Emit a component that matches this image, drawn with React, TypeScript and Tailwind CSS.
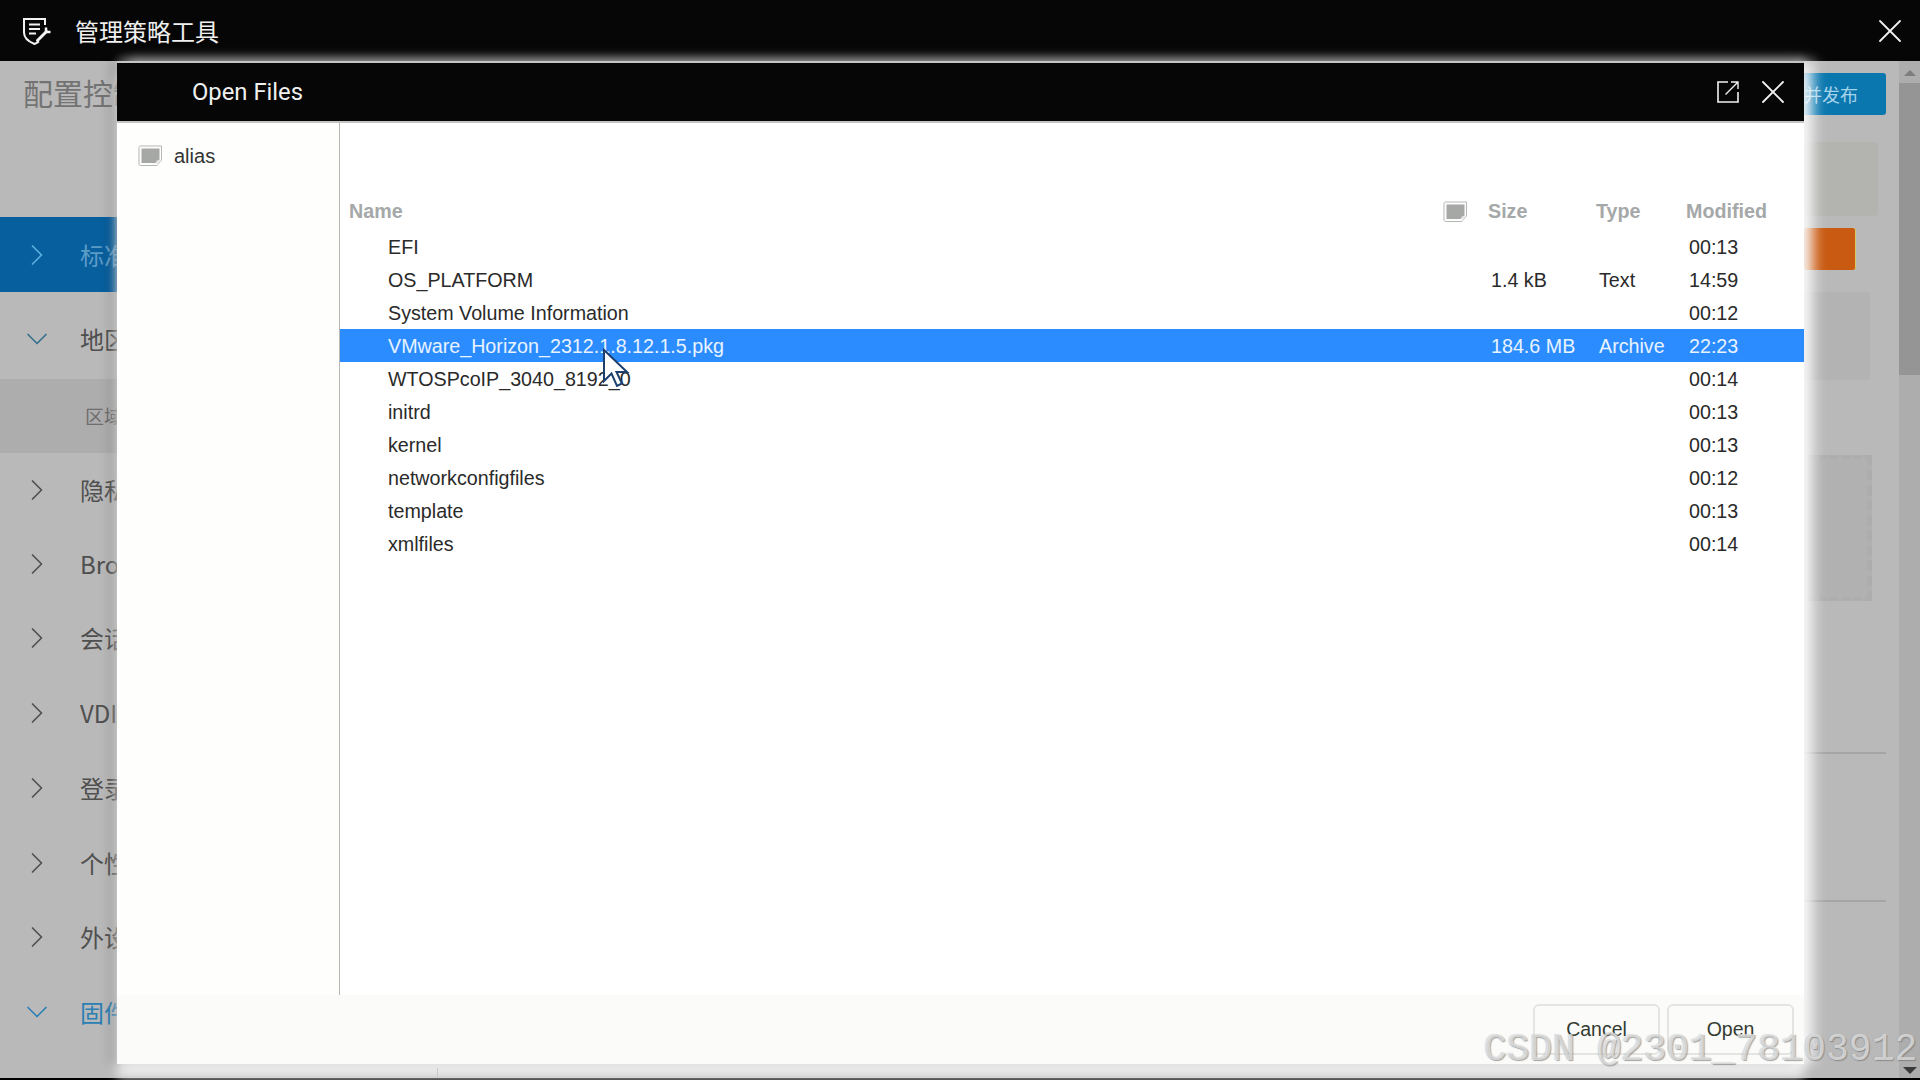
import { ChevronDown, ChevronRight, X } from "lucide-react"

const navItems = [
  { label: "标准配置", open: false, active: true, height: "h-[75px]" },
  { label: "地区", open: true, height: "h-[76px] mt-[9px]" },
  { label: "区域", sub: true, height: "h-[74px] mt-[2px]" },
  { label: "隐私", height: "h-[73px]" },
  { label: "Browser", height: "h-[75px]" },
  { label: "会话", height: "h-[74px]" },
  { label: "VDI", height: "h-[75px]" },
  { label: "登录", height: "h-[75px]" },
  { label: "个性化", height: "h-[75px]" },
  { label: "外设", height: "h-[74px]" },
  { label: "固件", open: true, blue: true, height: "h-[75px]" },
]

const files = [
  { name: "EFI", size: "", type: "", modified: "00:13" },
  { name: "OS_PLATFORM", size: "1.4 kB", type: "Text", modified: "14:59" },
  { name: "System Volume Information", size: "", type: "", modified: "00:12" },
  { name: "VMware_Horizon_2312.1.8.12.1.5.pkg", size: "184.6 MB", type: "Archive", modified: "22:23", selected: true },
  { name: "WTOSPcoIP_3040_8192_0", size: "", type: "", modified: "00:14" },
  { name: "initrd", size: "", type: "", modified: "00:13" },
  { name: "kernel", size: "", type: "", modified: "00:13" },
  { name: "networkconfigfiles", size: "", type: "", modified: "00:12" },
  { name: "template", size: "", type: "", modified: "00:13" },
  { name: "xmlfiles", size: "", type: "", modified: "00:14" },
]

const DriveIcon = () => (
  <svg width="25" height="22" viewBox="0 0 25 22" fill="none">
    <path d="M1 2.5C1 1.7 1.7 1 2.5 1H23.5V15L19 20.5H2.5C1.7 20.5 1 19.8 1 19Z" fill="#fdfdfd" stroke="#b5b7b5" />
    <path d="M3.5 3.5H21.5V14.5L17.5 18H3.5Z" fill="#a6a8a5" />
    <path d="M23.5 15L19 20.5L18.5 15.5Z" fill="#e8e8e8" />
  </svg>
)

const ShieldLogo = () => (
  <svg width="30" height="30" viewBox="0 0 30 30" fill="none" stroke="#f2f2f2" strokeWidth="2">
    <path d="M17 25.5C15.5 26.6 13.8 27.5 12.5 28C7.5 26 2 22.5 2 16.5V3H23V9" />
    <path d="M7 8.5H18M7 13H18M7 17.5H14" />
    <path d="M15.5 24.5L24.5 15.5" strokeWidth="3" strokeLinecap="round" />
    <path d="M24 11.5V16H28.5" strokeWidth="2.5" />
  </svg>
)

const PopOutIcon = () => (
  <svg width="22" height="22" viewBox="0 0 22 22" fill="none" stroke="#f2f2f2" strokeWidth="1.6">
    <path d="M11 1H1V21H21V11" />
    <path d="M8.5 13.5L21 1M14 1H21V8" strokeWidth="1.4" />
  </svg>
)

const Cursor = () => (
  <svg className="absolute left-[602px] top-[348px]" width="28" height="40" viewBox="0 0 28 40">
    <path d="M2 2V33L9.5 25.5L15 38L20 35.5L14.5 24H25Z" fill="#ffffff" stroke="#1c3f6e" strokeWidth="2" />
  </svg>
)

const App = () => {
  return (
    <div className="relative flex h-[1080px] w-[1920px] flex-col overflow-hidden bg-black font-['Liberation_Sans','Noto_Sans_CJK_SC',sans-serif]">
      <header className="flex h-[61px] shrink-0 items-center bg-[#060606] pl-[22px] pr-[10px] text-[#f0f0f0]">
        <ShieldLogo />
        <span className="ml-[23px] font-['Noto_Sans_CJK_SC',sans-serif] text-[24px]">管理策略工具</span>
        <X className="ml-auto" size={40} strokeWidth={1.1} />
      </header>

      <div className="flex flex-1 overflow-hidden bg-[#b9b9b9]">
        <aside className="w-[120px] shrink-0 overflow-hidden">
          <div className="flex h-[94px] items-start whitespace-nowrap pl-[23px] pt-[9px] font-['Noto_Sans_CJK_SC',sans-serif] text-[30px] text-[#737373]">
            配置控制台
          </div>
          <div className="h-[62px]" />
          {navItems.map((item) => (
            <div
              key={item.label}
              className={`flex items-center whitespace-nowrap font-['Noto_Sans_CJK_SC',sans-serif] ${item.height} ${
                item.active ? "bg-[#085f9e] text-[#5b9cc6]" : item.blue ? "text-[#2a7fb4]" : "text-[#4f4f4f]"
              } ${item.sub ? "bg-[#adadad] pl-[85px] text-[19px] text-[#6e6e6e]" : "pl-[19px] text-[24px]"}`}
            >
              {!item.sub &&
                (item.open ? (
                  <ChevronDown className={`mr-[25px] shrink-0 ${item.blue ? "text-[#2a7fb4]" : "text-[#37708f]"}`} size={36} strokeWidth={1.1} />
                ) : (
                  <ChevronRight className={`mr-[25px] shrink-0 ${item.active ? "text-[#5db0e0]" : "text-[#4f4f4f]"}`} size={36} strokeWidth={1.1} />
                ))}
              {item.label}
            </div>
          ))}
        </aside>

        <main className="flex-1" />

        <section className="flex w-[95px] shrink-0 flex-col items-end pr-[13px]">
          <div className="mt-[12px] flex h-[42px] w-[84px] items-center justify-end whitespace-nowrap rounded-[3px] bg-[#0a77ae] pr-[28px] font-['Noto_Sans_CJK_SC',sans-serif] text-[18px] text-[#a5d3ea]">
            并发布
          </div>
          <div className="mr-[8px] mt-[27px] h-[74px] w-[74px] rounded-[4px] bg-[#b3b3b0]" />
          <div className="mr-[30px] mt-[12px] h-[42px] w-[52px] rounded-[3px] border-r border-[#d8c860] bg-[#c85a12]" />
          <div className="mr-[16px] mt-[22px] h-[88px] w-[66px] rounded-[3px] bg-[#b3b3b3]" />
          <div className="mr-[14px] mt-[75px] h-[146px] w-[64px] border-y-[4px] border-r-[5px] border-dashed border-[#adadad] bg-[#b1b1b1]" />
          <div className="mt-[151px] h-[2px] w-[82px] bg-[#a5a5a5]" />
          <div className="mt-[146px] h-[2px] w-[82px] bg-[#a5a5a5]" />
        </section>

        <div className="flex w-[21px] shrink-0 flex-col items-center bg-[#adadad]">
          <div className="mt-[9px] h-0 w-0 border-x-[6px] border-b-[6px] border-x-transparent border-b-[#7d7d7d]" />
          <div className="mt-[7px] h-[292px] w-full bg-[#959595]" />
          <div className="mt-auto mb-[4px] h-0 w-0 border-x-[7px] border-t-[7px] border-x-transparent border-t-[#3a3a3a]" />
        </div>
      </div>

      <div className="h-[2px] shrink-0 bg-black" />

      <div className="absolute left-[117px] top-[61px] flex h-[1003px] w-[1687px] flex-col bg-white shadow-[-8px_0_10px_rgba(0,0,0,0.12),10px_0_12px_rgba(255,255,255,0.75),0_14px_10px_rgba(240,240,240,0.9),0_-4px_8px_rgba(255,255,255,0.25)]">
        <div className="flex h-[62px] shrink-0 items-center border-y-2 border-[#c4c4c4] bg-[#060606] pl-[75px] pr-[11px] font-['Roboto',sans-serif] text-[23.8px] text-[#f0f0f0]">
          <span className="pt-[1px]">Open Files</span>
          <span className="ml-auto mr-[14px]">
            <PopOutIcon />
          </span>
          <X size={40} strokeWidth={1.1} />
        </div>

        <div className="flex flex-1 overflow-hidden">
          <div className="w-[223px] shrink-0 border-r border-[#b8b8b0] bg-[#fefefc]">
            <div className="flex items-center pl-[21px] pt-[18px] text-[20px] text-[#333333]">
              <DriveIcon />
              <span className="ml-[11px]">alias</span>
            </div>
          </div>

          <div className="flex-1 bg-white pt-[72px] text-[19.7px] leading-[33px] text-[#2a2a2a]">
            <div className="mb-[2px] flex h-[33px] items-center font-bold text-[#a5a8a8]">
              <span className="pl-[9px]">Name</span>
              <span className="ml-auto mr-[20px]">
                <DriveIcon />
              </span>
              <span className="w-[108px]">Size</span>
              <span className="w-[90px]">Type</span>
              <span className="w-[118px]">Modified</span>
            </div>
            {files.map((file) => (
              <div
                key={file.name}
                className={`flex h-[33px] items-center pt-[1px] ${file.selected ? "bg-[#2b8cff] text-[#e8f3ff]" : ""}`}
              >
                <span className="pl-[48px]">{file.name}</span>
                <span className="ml-auto w-[108px]">{file.size}</span>
                <span className="w-[90px]">{file.type}</span>
                <span className="w-[115px]">{file.modified}</span>
              </div>
            ))}
          </div>
        </div>

        <div className="flex h-[69px] shrink-0 items-start justify-end gap-[7px] bg-[#fbfbf9] pr-[10px] pt-[9px] text-[19.5px] text-[#333c33]">
          <button className="flex h-[51px] w-[127px] items-center justify-center rounded-[6px] border-2 border-[#e4e4e0]">Cancel</button>
          <button className="flex h-[51px] w-[127px] items-center justify-center rounded-[6px] border-2 border-[#e4e4e0]">Open</button>
        </div>
      </div>

      <Cursor />

      <div className="absolute left-[437px] top-[1068px] h-[10px] border-l border-[#c8c8c8] pl-[103px]">
        <div className="mt-[7px] h-[3px] overflow-hidden font-['Noto_Sans_CJK_SC',sans-serif] text-[19px] leading-[30px] text-[#333333]">
          软件
        </div>
      </div>

      <span className="absolute left-[1484px] top-[1028px] whitespace-nowrap font-['Liberation_Mono',monospace] text-[38px] leading-[44px] text-[rgba(236,236,236,0.7)] [text-shadow:1px_1px_1px_rgba(110,110,110,0.6),-1px_0_1px_rgba(150,150,150,0.35)]">
        CSDN @2301_78103912
      </span>
    </div>
  )
}

export default App
